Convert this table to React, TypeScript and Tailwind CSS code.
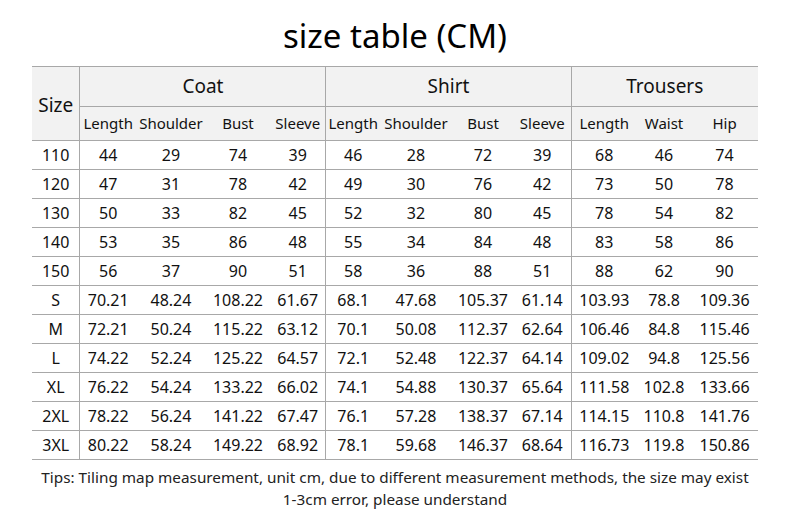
const COLS = [
  // coat
  56, 70, 64, 56,
  // shirt
  54, 72, 62, 57,
  // trousers
  66, 54, 67,
];

const SUB = ['Length', 'Shoulder', 'Bust', 'Sleeve', 'Length', 'Shoulder', 'Bust', 'Sleeve', 'Length', 'Waist', 'Hip'];

const rows = [
  ['110', '44', '29', '74', '39', '46', '28', '72', '39', '68', '46', '74'],
  ['120', '47', '31', '78', '42', '49', '30', '76', '42', '73', '50', '78'],
  ['130', '50', '33', '82', '45', '52', '32', '80', '45', '78', '54', '82'],
  ['140', '53', '35', '86', '48', '55', '34', '84', '48', '83', '58', '86'],
  ['150', '56', '37', '90', '51', '58', '36', '88', '51', '88', '62', '90'],
  ['S', '70.21', '48.24', '108.22', '61.67', '68.1', '47.68', '105.37', '61.14', '103.93', '78.8', '109.36'],
  ['M', '72.21', '50.24', '115.22', '63.12', '70.1', '50.08', '112.37', '62.64', '106.46', '84.8', '115.46'],
  ['L', '74.22', '52.24', '125.22', '64.57', '72.1', '52.48', '122.37', '64.14', '109.02', '94.8', '125.56'],
  ['XL', '76.22', '54.24', '133.22', '66.02', '74.1', '54.88', '130.37', '65.64', '111.58', '102.8', '133.66'],
  ['2XL', '78.22', '56.24', '141.22', '67.47', '76.1', '57.28', '138.37', '67.14', '114.15', '110.8', '141.76'],
  ['3XL', '80.22', '58.24', '149.22', '68.92', '78.1', '59.68', '146.37', '68.64', '116.73', '119.8', '150.86'],
];

// columns that carry a vertical divider on their left
const GROUP_START = new Set([0, 1, 5, 9]);

export default function App() {
  return (
    <div
      className="w-[790px] h-[527px] bg-white text-[#111] flex flex-col items-center"
      style={{ fontFamily: '"Noto Sans", "Open Sans", sans-serif' }}
    >
      <h1 className="mt-[16px] mb-[10px] text-[33px] leading-[40px] text-black">size table (CM)</h1>

      <table className="table-fixed border-collapse w-[726px] text-[16px] text-center">
        <colgroup>
          <col className="w-[48px]" />
          {COLS.map((w, i) => (
            <col key={i} style={{ width: w }} />
          ))}
        </colgroup>
        <thead className="bg-[#f2f2f2]">
          <tr className="h-[40px] border-t border-[#a8a8a8]">
            <th rowSpan={2} className="font-normal text-[19px] border-b border-[#a8a8a8] pt-[4px]">Size</th>
            <th colSpan={4} className="font-normal text-[19px] border-l border-b border-[#a8a8a8]">Coat</th>
            <th colSpan={4} className="font-normal text-[19px] border-l border-b border-[#a8a8a8]">Shirt</th>
            <th colSpan={3} className="font-normal text-[19px] border-l border-b border-[#a8a8a8]">Trousers</th>
          </tr>
          <tr className="h-[34px] border-b border-[#a8a8a8] text-[15px]">
            {SUB.map((s, i) => (
              <th
                key={i}
                className={
                  'font-normal whitespace-nowrap ' + (GROUP_START.has(i + 1) ? 'border-l border-[#a8a8a8]' : '')
                }
              >
                {s}
              </th>
            ))}
          </tr>
        </thead>
        <tbody>
          {rows.map((r) => (
            <tr key={r[0]} className="h-[29px] border-b border-[#a8a8a8]">
              {r.map((v, i) => (
                <td key={i} className={GROUP_START.has(i) && i > 0 ? 'border-l border-[#a8a8a8]' : ''}>
                  {v}
                </td>
              ))}
            </tr>
          ))}
        </tbody>
      </table>

      <p className="mt-[6px] text-center text-[15.3px] leading-[22px] text-[#222]">
        Tips: Tiling map measurement, unit cm, due to different measurement methods, the size may exist
        <br />
        1-3cm error, please understand
      </p>
    </div>
  );
}
